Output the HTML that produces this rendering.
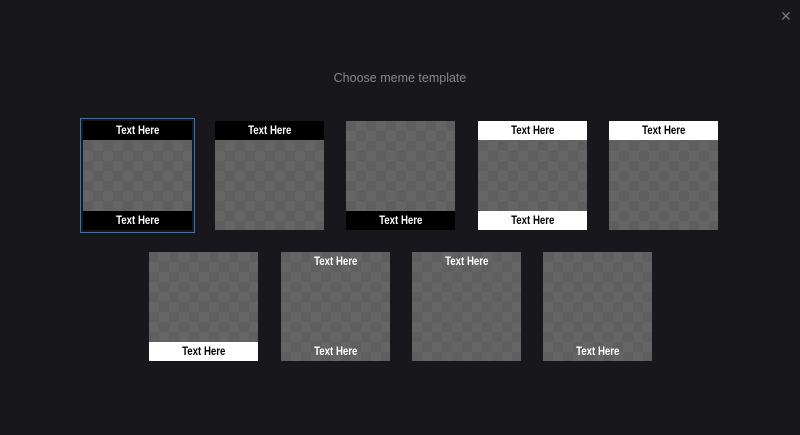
<!DOCTYPE html>
<html><head><style>
html,body{margin:0;width:800px;height:435px;background:#17171c;overflow:hidden;font-family:"Liberation Sans",sans-serif}
.t{position:absolute;width:109px;height:109px;background-color:#5f5f5f;
background-image:linear-gradient(45deg,#656565 25%,transparent 25%,transparent 75%,#656565 75%),linear-gradient(45deg,#656565 25%,transparent 25%,transparent 75%,#656565 75%);
background-size:20px 20px;background-position:0 0,10px 10px}
.b{position:absolute;left:0;width:109px;height:19px;line-height:21px;text-align:center;font-weight:bold;font-size:11.5px}
.b span{display:inline-block;transform:scaleX(0.84)}
.k{background:#000;color:#fff}.w{background:#fff;color:#000}.n{color:#fff}
.top{top:0}.bot{bottom:0}
.sel{position:absolute;left:80px;top:118px;width:113px;height:113px;border:1.5px solid #2f72c4}
h1{position:absolute;top:71px;left:0;width:800px;text-align:center;font-weight:normal;font-size:12.5px;color:#85858c;margin:0}
.x{position:absolute;left:780px;top:8px;color:#777;font-size:14px}
</style></head><body>
<div class="x">✕</div>
<h1>Choose meme template</h1>
<div class="sel"></div>
<div class="t" style="left:83px;top:121px"><div class="b k top"><span>Text Here</span></div><div class="b k bot"><span>Text Here</span></div></div>
<div class="t" style="left:215px;top:121px"><div class="b k top"><span>Text Here</span></div></div>
<div class="t" style="left:346px;top:121px"><div class="b k bot"><span>Text Here</span></div></div>
<div class="t" style="left:478px;top:121px"><div class="b w top"><span>Text Here</span></div><div class="b w bot"><span>Text Here</span></div></div>
<div class="t" style="left:609px;top:121px"><div class="b w top"><span>Text Here</span></div></div>
<div class="t" style="left:149px;top:252px"><div class="b w bot"><span>Text Here</span></div></div>
<div class="t" style="left:281px;top:252px"><div class="b n top"><span>Text Here</span></div><div class="b n bot"><span>Text Here</span></div></div>
<div class="t" style="left:412px;top:252px"><div class="b n top"><span>Text Here</span></div></div>
<div class="t" style="left:543px;top:252px"><div class="b n bot"><span>Text Here</span></div></div>
</body></html>
